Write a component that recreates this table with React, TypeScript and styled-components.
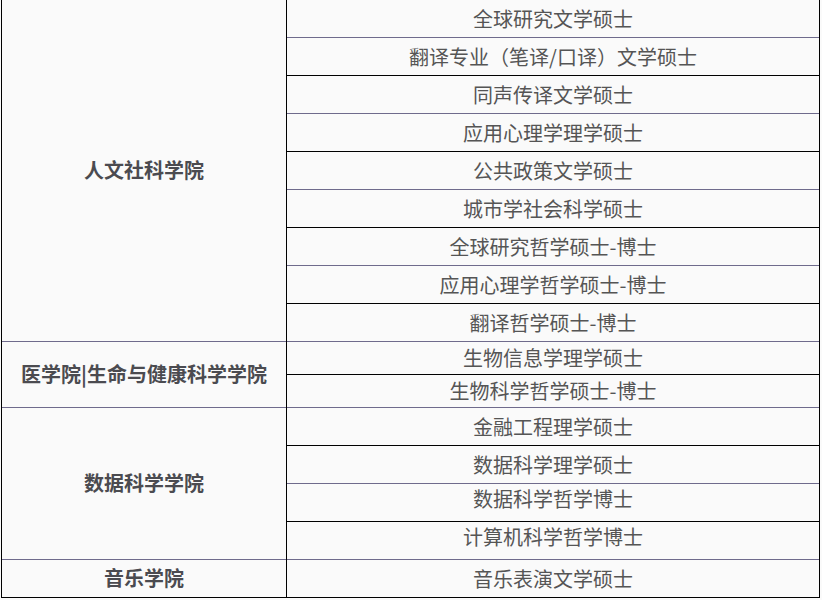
import styled, { createGlobalStyle } from "styled-components";

const GlobalStyle = createGlobalStyle`
  html, body {
    margin: 0;
    padding: 0;
    background: #fafafa;
  }
  body {
    font-family: "Noto Sans CJK SC", "Noto Sans", sans-serif;
  }
`;

const Table = styled.div`
  margin-left: 1px;
  width: 819px;
  box-sizing: border-box;
  border-left: 1px solid #000;
  border-right: 1px solid #000;
  background: #fafafa;
`;

const Group = styled.div`
  display: grid;
  grid-template-columns: 284px 1fr;
`;

const SchoolCell = styled.div<{ $last?: boolean }>`
  display: flex;
  align-items: center;
  justify-content: center;
  padding-bottom: 2px;
  border-bottom: 1px solid ${(p) => (p.$last ? "#000" : "#6f6b8c")};
  font-size: 20px;
  font-weight: 700;
  color: #4b4b50;
  white-space: nowrap;
`;

const ProgramList = styled.div`
  display: flex;
  flex-direction: column;
  border-left: 1px solid #000;
`;

const ProgramCell = styled.div<{ $h: number; $dark: boolean; $lift?: boolean }>`
  height: ${(p) => p.$h}px;
  box-sizing: border-box;
  display: flex;
  align-items: center;
  justify-content: center;
  padding-bottom: ${(p) => (p.$lift ? 8 : p.$h < 38 ? 2 : 0)}px;
  border-bottom: 1px solid ${(p) => (p.$dark ? "#000" : "#6f6b8c")};
  font-size: 20px;
  color: #555;
  white-space: nowrap;
`;

interface Program {
  title: string;
  lift?: boolean;
}

interface School {
  name: string;
  rowHeight: number;
  programs: Program[];
}

const schools: School[] = [
  {
    name: "人文社科学院",
    rowHeight: 38,
    programs: [
      { title: "全球研究文学硕士" },
      { title: "翻译专业（笔译/口译）文学硕士" },
      { title: "同声传译文学硕士" },
      { title: "应用心理学理学硕士" },
      { title: "公共政策文学硕士" },
      { title: "城市学社会科学硕士" },
      { title: "全球研究哲学硕士-博士" },
      { title: "应用心理学哲学硕士-博士" },
      { title: "翻译哲学硕士-博士" },
    ],
  },
  {
    name: "医学院|生命与健康科学学院",
    rowHeight: 33,
    programs: [{ title: "生物信息学理学硕士" }, { title: "生物科学哲学硕士-博士" }],
  },
  {
    name: "数据科学学院",
    rowHeight: 38,
    programs: [
      { title: "金融工程理学硕士" },
      { title: "数据科学理学硕士" },
      { title: "数据科学哲学博士", lift: true },
      { title: "计算机科学哲学博士", lift: true },
    ],
  },
  {
    name: "音乐学院",
    rowHeight: 38,
    programs: [{ title: "音乐表演文学硕士" }],
  },
];

export default function App() {
  let index = 0;
  return (
    <>
      <GlobalStyle />
      <Table>
        {schools.map((school, i) => (
          <Group key={school.name}>
            <SchoolCell $last={i === schools.length - 1}>{school.name}</SchoolCell>
            <ProgramList>
              {school.programs.map((program) => {
                const dark = index % 2 === 1;
                index += 1;
                return (
                  <ProgramCell
                    key={program.title}
                    $h={school.rowHeight}
                    $dark={dark}
                    $lift={program.lift}
                  >
                    {program.title}
                  </ProgramCell>
                );
              })}
            </ProgramList>
          </Group>
        ))}
      </Table>
    </>
  );
}
